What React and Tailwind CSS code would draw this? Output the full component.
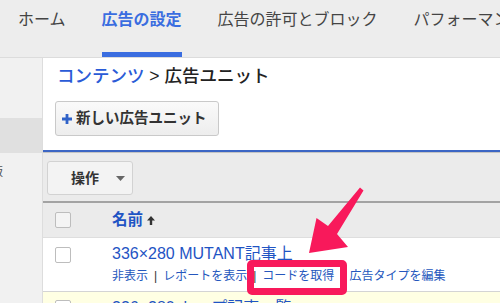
export default function App() {
  const font = "font-['Liberation_Sans','Noto_Sans_CJK_JP',sans-serif]";
  const Sep = () => <span className="text-[#333] text-[12px]">|</span>;
  return (
    <div className={`relative w-[500px] h-[303px] overflow-hidden bg-white ${font}`}>
      {/* top nav */}
      <nav className="h-[58px] bg-[#ededed] border-b border-[#dcdcdc] flex whitespace-nowrap pl-[18px] gap-[36px] text-[16px] text-[#444]">
        <div className="pt-[10px] leading-[20px]">ホーム</div>
        <div className="flex flex-col">
          <div className="pt-[10px] leading-[20px] font-bold text-[#3a6de0]">広告の設定</div>
          <div className="mt-auto h-[5px] bg-[#3a6de0]" />
        </div>
        <div className="pt-[10px] leading-[20px]">広告の許可とブロック</div>
        <div className="pt-[10px] leading-[20px]">パフォーマンス レポート</div>
      </nav>

      <div className="flex h-[245px]">
        {/* sidebar */}
        <aside className="w-[43px] shrink-0 bg-[#f1f1f1] border-r border-[#dddddd] overflow-hidden">
          <div className="h-[60px]" />
          <div className="h-[35px] bg-[#e0e0e0]" />
          <div className="mt-[12px] -ml-[9px] text-[12px] leading-[14px] text-[#555] whitespace-nowrap">版</div>
        </aside>

        {/* main */}
        <main className="flex-1 min-w-0 overflow-hidden whitespace-nowrap">
          <div className="pl-[14px] pt-[7px] text-[17.5px] leading-[22px] font-medium text-[#222]">
            <span className="text-[#2a5bd7]">コンテンツ</span> &gt; 広告ユニット
          </div>
          <div className="mt-[14px] ml-[12px] h-[35px] w-[164px] flex items-center gap-[4px] pl-[6px] rounded-[3px] border border-[#c9c9c9] bg-gradient-to-b from-[#fafafa] to-[#ededed] text-[14.5px] font-bold text-[#333]">
            <svg width="10" height="10" viewBox="0 0 10 10">
              <path d="M3.6 0h2.8v3.6H10v2.8H6.4V10H3.6V6.4H0V3.6h3.6z" fill="#2f62c8" />
            </svg>
            新しい広告ユニット
          </div>
          <div className="mt-[14px] h-[2px] bg-[#3c66c4]" />
          <div className="h-px bg-[#c4c4c4]" />
          <div className="bg-[#ebebeb] pt-[8px] pb-[6px] pl-[4px]">
            <div className="h-[34px] w-[86px] flex items-center justify-between pl-[23px] pr-[7px] rounded-[3px] border border-[#d2d2d2] bg-[#f3f3f3] text-[14px] font-bold text-[#333]">
              操作
              <svg width="9" height="5" viewBox="0 0 9 5">
                <path d="M0 0h9L4.5 5z" fill="#666" />
              </svg>
            </div>
          </div>
          <div className="h-[2px] bg-[#a3a3a3]" />
          {/* header row */}
          <div className="h-[34px] bg-[#ebebeb] flex items-center">
            <div className="ml-[12px] w-[16px] h-[16px] border border-[#bdbdbd] bg-[#f4f4f4] rounded-[2px]" />
            <div className="ml-[41px] text-[15.5px] font-bold text-[#1f54c4] flex items-center gap-[4px]">
              名前
              <svg width="8" height="9" viewBox="0 0 8 9">
                <path d="M4 0L8 4.5H5.2V9H2.8V4.5H0z" fill="#333" />
              </svg>
            </div>
          </div>
          <div className="h-px bg-[#dedede]" />
          {/* row 1 */}
          <div className="h-[53px] flex items-start">
            <div className="ml-[12px] mt-[9px] w-[16px] h-[16px] border border-[#bdbdbd] bg-white rounded-[2px]" />
            <div className="ml-[41px] pt-[6px]">
              <div className="text-[16px] leading-[20px] text-[#1f54c4]">336×280 MUTANT記事上</div>
              <div className="mt-[4px] flex items-center gap-[6px] text-[12px] leading-[16px] text-[#2557bd]">
                <span>非表示</span>
                <Sep />
                <span>レポートを表示</span>
                <Sep />
                <span>コードを取得</span>
                <Sep />
                <span>広告タイプを編集</span>
              </div>
            </div>
          </div>
          <div className="h-px bg-[#d4d4d4]" />
          {/* row 2 */}
          <div className="h-[40px] bg-[#ffffe3] flex items-start">
            <div className="ml-[12px] mt-[8px] w-[16px] h-[16px] border border-[#bdbdbd] bg-white rounded-[2px]" />
            <div className="ml-[41px] pt-[6px] text-[16px] leading-[20px] text-[#1f54c4]">336×280 トップ記事一覧</div>
          </div>
        </main>
      </div>

      {/* annotation: red box */}
      <div className="absolute left-[247px] top-[260px] w-[100px] h-[35px] border-[7px] border-[#f8195b] rounded-[5px]" />
      {/* annotation: arrow */}
      <svg className="absolute left-0 top-0" width="500" height="303" viewBox="0 0 500 303">
        <polygon
          points="309,253 316.5,218 328,226 360,187.5 363.5,190.5 337,234 348,247"
          fill="#f8195b"
        />
      </svg>
    </div>
  );
}
